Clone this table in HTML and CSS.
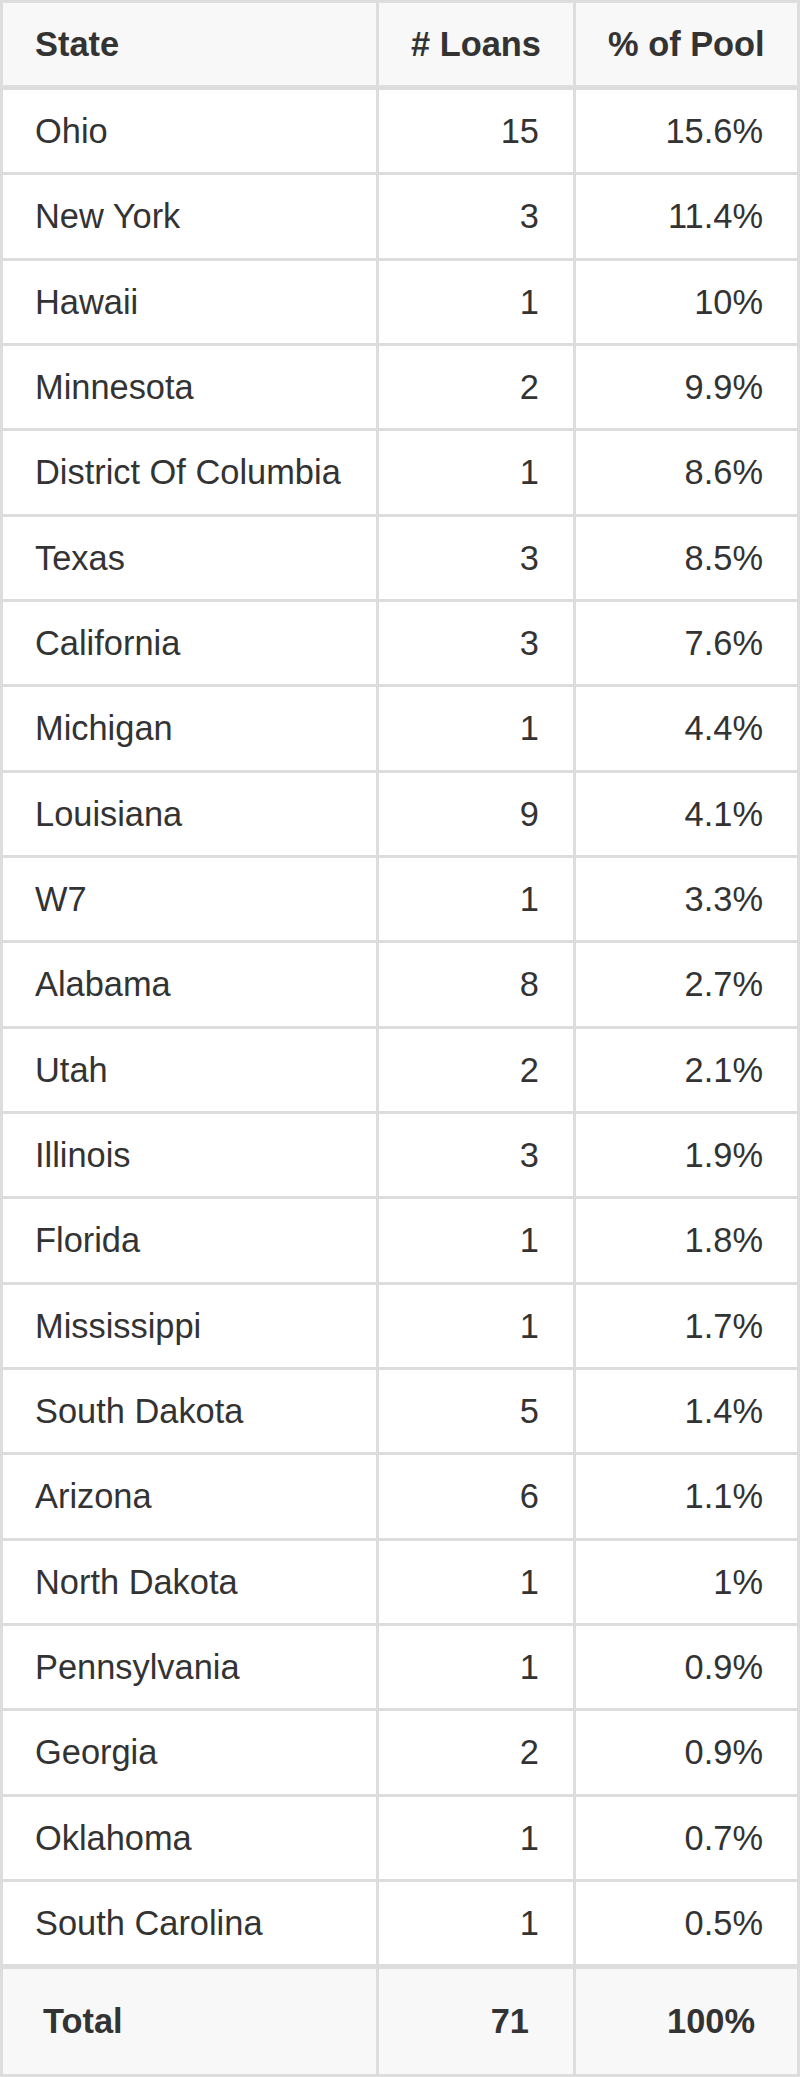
FILE: index.html
```html
<!DOCTYPE html>
<html lang="en">
<head>
<meta charset="utf-8">
<title>Loans by State</title>
<link rel="stylesheet" href="styles.css">
</head>
<body>
<table class="pool">
  <colgroup>
    <col class="c-state">
    <col class="c-loans">
    <col class="c-pct">
  </colgroup>
  <thead>
    <tr><th class="l">State</th><th class="r"># Loans</th><th class="r">% of Pool</th></tr>
  </thead>
  <tbody>
    <tr><td class="l">Ohio</td><td class="r">15</td><td class="r">15.6%</td></tr>
    <tr><td class="l">New York</td><td class="r">3</td><td class="r">11.4%</td></tr>
    <tr><td class="l">Hawaii</td><td class="r">1</td><td class="r">10%</td></tr>
    <tr><td class="l">Minnesota</td><td class="r">2</td><td class="r">9.9%</td></tr>
    <tr><td class="l">District Of Columbia</td><td class="r">1</td><td class="r">8.6%</td></tr>
    <tr><td class="l">Texas</td><td class="r">3</td><td class="r">8.5%</td></tr>
    <tr><td class="l">California</td><td class="r">3</td><td class="r">7.6%</td></tr>
    <tr><td class="l">Michigan</td><td class="r">1</td><td class="r">4.4%</td></tr>
    <tr><td class="l">Louisiana</td><td class="r">9</td><td class="r">4.1%</td></tr>
    <tr><td class="l">W7</td><td class="r">1</td><td class="r">3.3%</td></tr>
    <tr><td class="l">Alabama</td><td class="r">8</td><td class="r">2.7%</td></tr>
    <tr><td class="l">Utah</td><td class="r">2</td><td class="r">2.1%</td></tr>
    <tr><td class="l">Illinois</td><td class="r">3</td><td class="r">1.9%</td></tr>
    <tr><td class="l">Florida</td><td class="r">1</td><td class="r">1.8%</td></tr>
    <tr><td class="l">Mississippi</td><td class="r">1</td><td class="r">1.7%</td></tr>
    <tr><td class="l">South Dakota</td><td class="r">5</td><td class="r">1.4%</td></tr>
    <tr><td class="l">Arizona</td><td class="r">6</td><td class="r">1.1%</td></tr>
    <tr><td class="l">North Dakota</td><td class="r">1</td><td class="r">1%</td></tr>
    <tr><td class="l">Pennsylvania</td><td class="r">1</td><td class="r">0.9%</td></tr>
    <tr><td class="l">Georgia</td><td class="r">2</td><td class="r">0.9%</td></tr>
    <tr><td class="l">Oklahoma</td><td class="r">1</td><td class="r">0.7%</td></tr>
    <tr><td class="l">South Carolina</td><td class="r">1</td><td class="r">0.5%</td></tr>
  </tbody>
  <tfoot>
    <tr><td class="l">Total</td><td class="r">71</td><td class="r">100%</td></tr>
  </tfoot>
</table>
</body>
</html>
```

FILE: styles.css
```css
html, body {
  margin: 0;
  padding: 0;
  background: #ffffff;
}

.pool {
  width: 800px;
  table-layout: fixed;
  border-collapse: separate;
  border-spacing: 0;
  border: 3px solid #dddddd;
  font-family: "Liberation Sans", Arial, sans-serif;
  font-size: 34.4px;
  color: #333333;
}

.c-state { width: 376px; }
.c-loans { width: 197px; }
.c-pct { width: 221px; }

.pool th,
.pool td {
  box-sizing: border-box;
  padding: 0 34px 0 32px;
  vertical-align: middle;
  line-height: 1;
  white-space: nowrap;
  border-right: 3px solid #dddddd;
}

.pool th:last-child,
.pool td:last-child {
  border-right: 0;
}

.pool .l { text-align: left; }
.pool .r { text-align: right; }

.pool thead th {
  height: 87px;
  background: #f8f8f8;
  font-weight: bold;
  border-bottom: 5px solid #dddddd;
}

.pool tbody td {
  height: 85.33px;
  border-bottom: 3px solid #dddddd;
}

.pool tbody tr:last-child td {
  height: 82.33px;
  border-bottom: 0;
}

.pool tfoot td {
  height: 109.67px;
  background: #f8f8f8;
  font-weight: bold;
  border-top: 5px solid #dddddd;
}

.pool tfoot td.l { padding-left: 40px; }
.pool tfoot td:nth-child(2) { padding-right: 44px; }
.pool tfoot td:nth-child(3) { padding-right: 42px; }
```
